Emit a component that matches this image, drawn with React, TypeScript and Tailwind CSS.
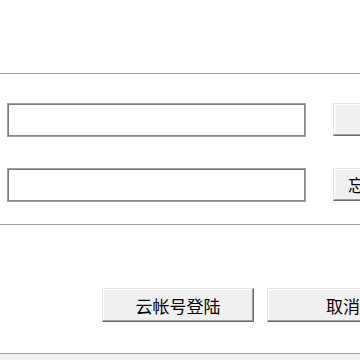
const btn =
  "box-border bg-[#f0f0f0] border-t border-l border-t-[#e3e3e3] border-l-[#e3e3e3] border-b border-r border-b-[#696969] border-r-[#696969] shadow-[inset_-1px_-1px_0_#a0a0a0,inset_1px_1px_0_#ffffff] text-[17px] leading-none text-black";

const field =
  "box-border h-[34px] w-[299px] bg-white border border-[#a0a0a0] shadow-[inset_1px_1px_0_#7a7a7a,inset_-1px_-1px_0_#8a8a8a]";

export default function App() {
  return (
    <div
      className="w-[360px] h-[360px] overflow-hidden bg-white"
      style={{ fontFamily: '"Noto Sans CJK SC", "Liberation Sans", sans-serif' }}
    >
      <div className="w-[480px] flex flex-col">
        <div className="h-[73px]" />
        <div className="h-px bg-[#a0a0a0]" />
        <div className="h-px bg-white" />

        <div className="mt-[28px] flex items-start pl-[7px] gap-[27px]">
          <div className={field} />
          <button className={`${btn} h-[33px] w-[100px] pl-[34px] text-left`}>注册帐号</button>
        </div>

        <div className="mt-[31px] flex items-start pl-[7px] gap-[27px]">
          <div className={field} />
          <button className={`${btn} h-[33px] w-[100px] pl-[14px] text-left`}>忘记密码</button>
        </div>

        <div className="mt-[22px] h-px bg-[#a0a0a0]" />
        <div className="h-px bg-white" />

        <div className="mt-[62px] flex items-start pl-[102px] gap-[13px]">
          <button className={`${btn} h-[34px] w-[152px]`}>云帐号登陆</button>
          <button className={`${btn} h-[34px] w-[152px]`}>取消</button>
        </div>

        <div className="mt-[31px] h-px bg-[#a0a0a0]" />
        <div className="h-[10px] bg-[#f0f0f0]" />
      </div>
    </div>
  );
}
